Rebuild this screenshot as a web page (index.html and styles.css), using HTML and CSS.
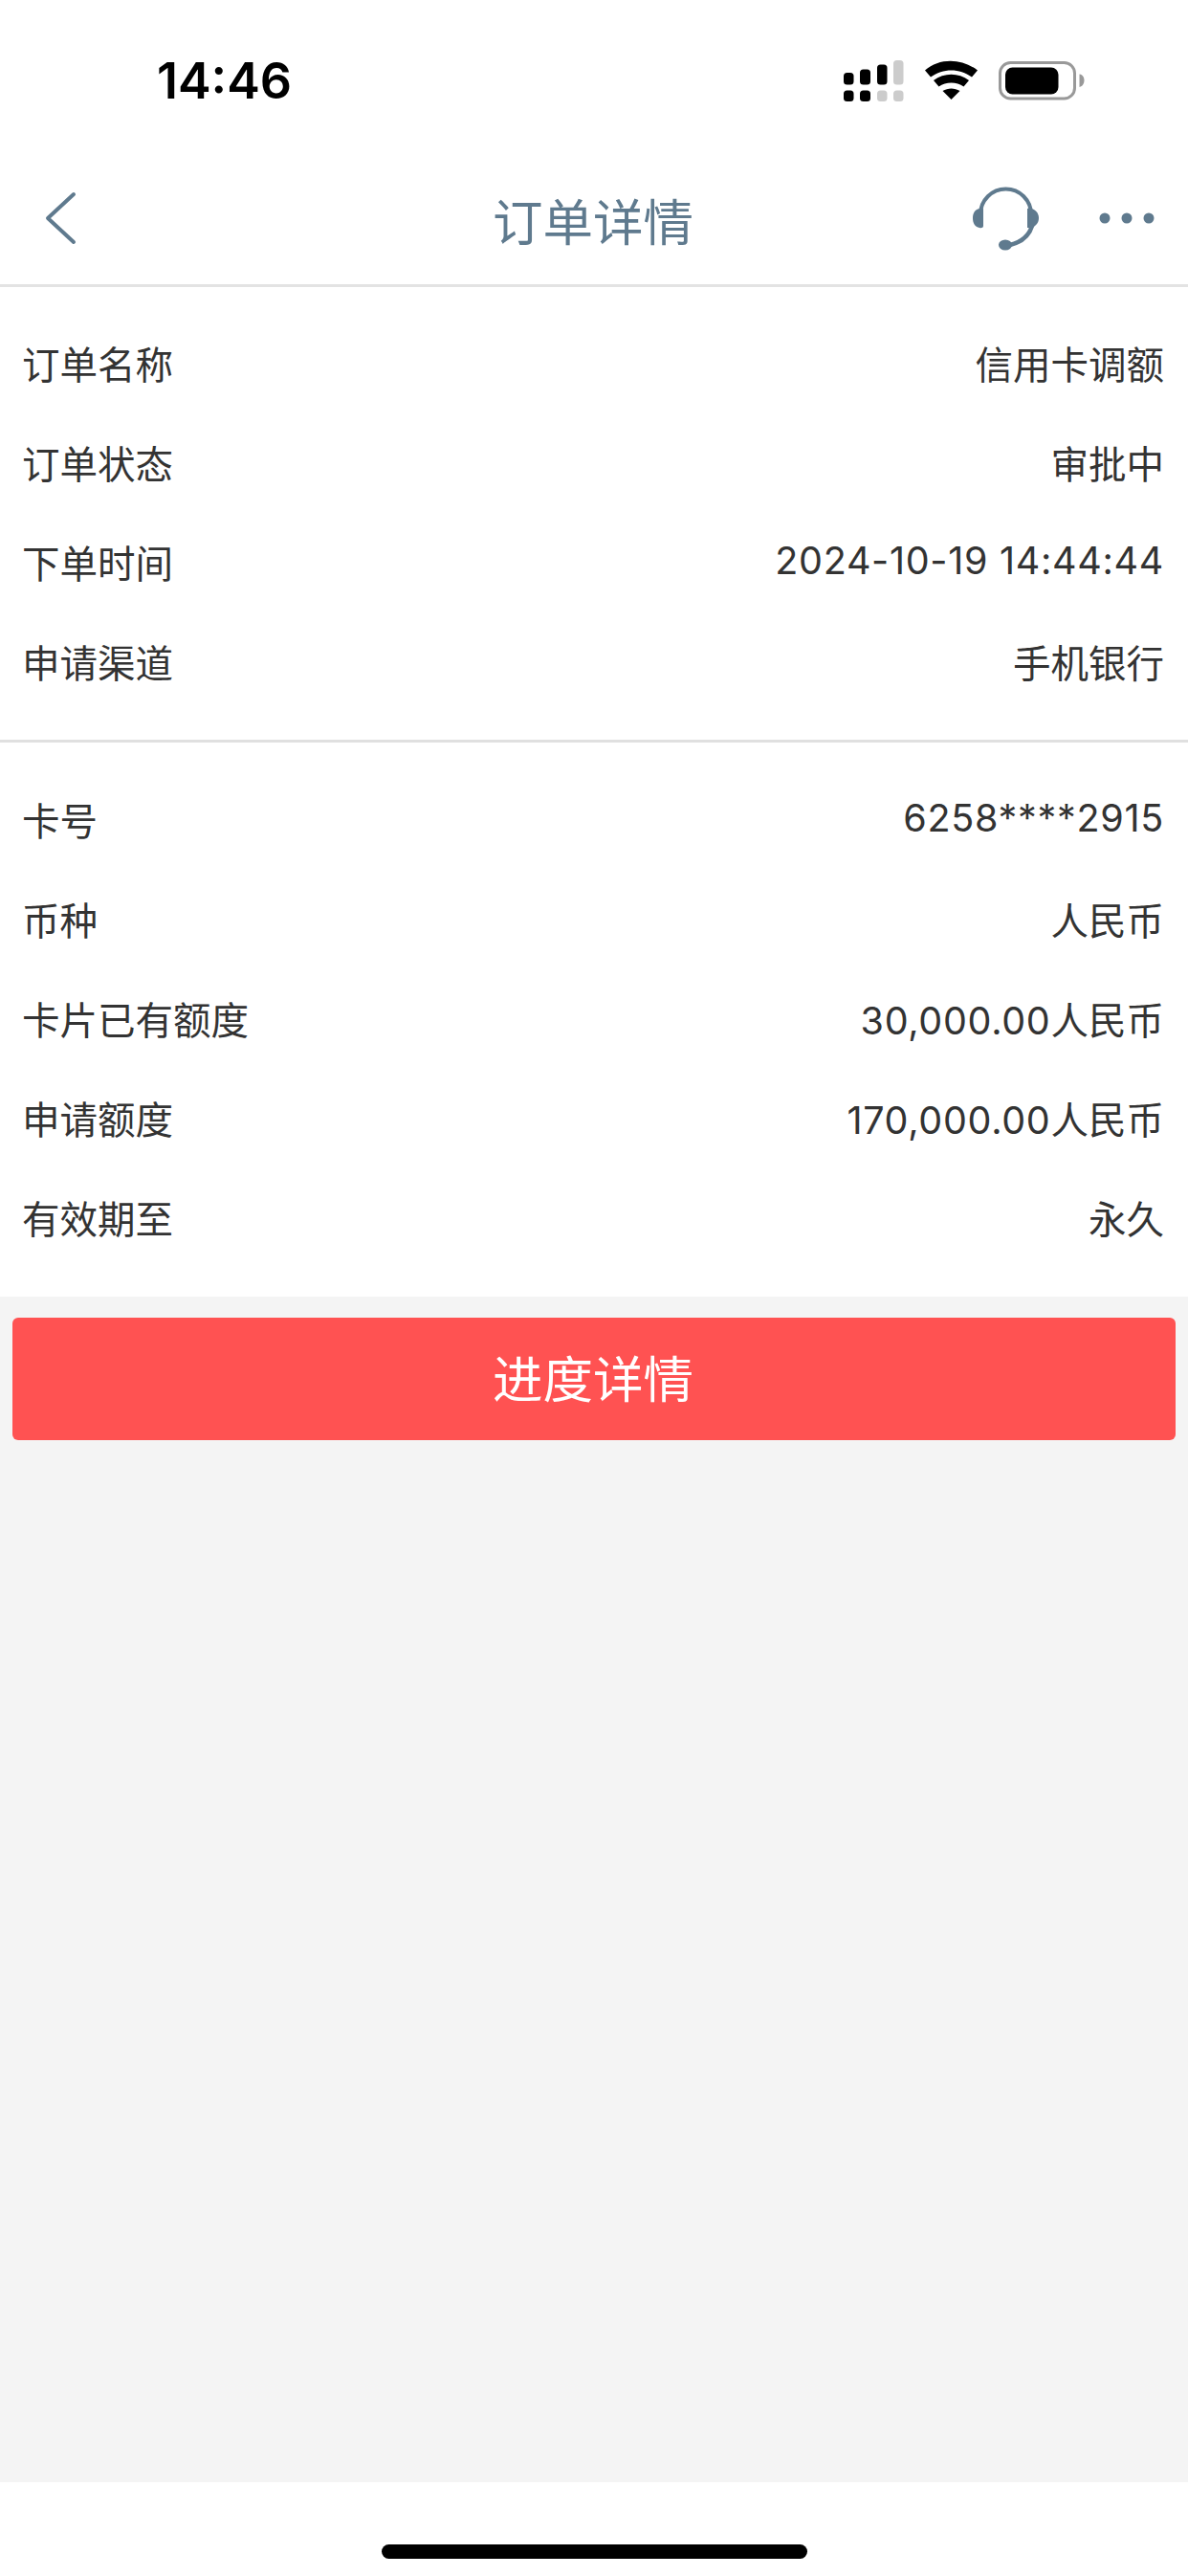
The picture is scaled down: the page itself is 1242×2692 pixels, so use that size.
FILE: index.html
```html
<!DOCTYPE html>
<html lang="zh-CN">
<head>
<meta charset="utf-8">
<title>订单详情</title>
<link rel="stylesheet" href="styles.css">
</head>
<body>
<div class="page">
  <header class="status">
    <span class="time">14:46</span>
    <svg class="status-icons" width="262" height="46" viewBox="880 60 262 46">
      <g fill="#000">
        <rect x="882" y="75" width="10.500" height="12.500" rx="3.500"/>
        <rect x="899" y="71.500" width="11" height="16" rx="3.500"/>
        <rect x="917" y="66.500" width="10.500" height="21" rx="3.500"/>
        <rect x="882" y="93.500" width="10.500" height="11.500" rx="3.500"/>
        <rect x="899" y="93.500" width="11" height="11.500" rx="3.500"/>
      </g>
      <g fill="#cccccc">
        <rect x="934" y="62" width="10.500" height="25.500" rx="3.500"/>
        <rect x="917" y="93.500" width="10.500" height="11.500" rx="3.500"/>
        <rect x="934" y="93.500" width="10.500" height="11.500" rx="3.500"/>
      </g>
      <path fill="#000" d="M967 72.500 C982 59.500 1005 59.500 1022 72.500 L1016 79.500 C1003 70 986 70 973 79.500 Z"/>
      <path fill="#000" d="M976 83 C987 74.500 1002 74.500 1013 83 L1007.500 89.500 C1000 84 989 84 981.500 89.500 Z"/>
      <path fill="#000" d="M985.500 94 C991 90.500 998 90.500 1003.500 94 L994.500 103 Z"/>
      <rect x="1045.500" y="64.500" width="78" height="37.500" rx="11" fill="none" stroke="#999999" stroke-width="3"/>
      <rect x="1051" y="69.500" width="55.500" height="28" rx="7.500" fill="#000"/>
      <path fill="#999999" d="M1128.500 76.500 C1132 77 1133.500 80 1133.500 83 C1133.500 86 1132 89 1128.500 90 Z"/>
    </svg>
  </header>

  <nav class="nav">
    <div class="nav-left">
      <svg width="34" height="56" viewBox="46 200 34 56" fill="none" stroke="#5f7a8e" stroke-width="4" stroke-linecap="round" stroke-linejoin="round">
        <path d="M77 203 L50 228 L77 253"/>
      </svg>
    </div>
    <h1 class="title">订单详情</h1>
    <div class="nav-right">
      <svg class="headset" width="72" height="70" viewBox="1016 193 72 70" fill="none">
        <path d="M1025 224 A26.500 26.500 0 0 1 1078 224 L1078 234" stroke="#5f7a8e" stroke-width="4" stroke-linecap="round"/>
        <path d="M1079 236 C1076 246 1068 253 1056 256" stroke="#5f7a8e" stroke-width="4.500" stroke-linecap="round"/>
        <path fill="#5f7a8e" d="M1028 218 L1028 236 C1028 238 1026 238.500 1024 238 C1019 237 1017 233 1017 228 C1017 223 1019 219 1024 218 C1026 217.500 1028 217 1028 218 Z"/>
        <path fill="#5f7a8e" d="M1074 218 C1081 217 1086 222 1086 228 C1086 234 1081 239 1074 238 Z"/>
        <ellipse cx="1051" cy="256" rx="7" ry="5.500" fill="#5f7a8e"/>
      </svg>
      <svg class="more" width="58" height="12" viewBox="1149 222 58 12" fill="#5f7a8e">
        <circle cx="1155" cy="228" r="5.500"/>
        <circle cx="1178" cy="228" r="5.500"/>
        <circle cx="1201" cy="228" r="5.500"/>
      </svg>
    </div>
  </nav>

  <section class="card card-first">
    <div class="row"><span>订单名称</span><span>信用卡调额</span></div>
    <div class="row"><span>订单状态</span><span>审批中</span></div>
    <div class="row"><span>下单时间</span><span class="num">2024-10-19 14:44:44</span></div>
    <div class="row"><span>申请渠道</span><span>手机银行</span></div>
  </section>

  <section class="card card-second">
    <div class="row"><span>卡号</span><span class="num">6258****2915</span></div>
    <div class="row"><span>币种</span><span>人民币</span></div>
    <div class="row"><span>卡片已有额度</span><span><span class="num">30,000.00</span>人民币</span></div>
    <div class="row"><span>申请额度</span><span><span class="num">170,000.00</span>人民币</span></div>
    <div class="row"><span>有效期至</span><span>永久</span></div>
  </section>

  <main class="content">
    <button class="primary" type="button"><span class="primary-label">进度详情</span></button>
  </main>

  <footer class="home">
    <div class="home-bar"></div>
  </footer>
</div>
</body>
</html>
```
FILE: styles.css
```css
* {
  box-sizing: border-box;
}

html,
body {
  margin: 0;
  padding: 0;
  background: #fff;
}

body {
  font-family: Inter, "Noto Sans CJK SC", sans-serif;
}

.page {
  display: flex;
  flex-direction: column;
  width: 1242px;
  height: 2692px;
  overflow: hidden;
}

.status {
  display: flex;
  justify-content: space-between;
  align-items: center;
  height: 168px;
  padding: 0 100px 0 164px;
  flex: none;
}

.time {
  margin-top: 2px;
  font-size: 52px;
  font-weight: 600;
  line-height: 1;
  color: #000;
}

.status-icons {
  display: block;
}

.nav {
  display: grid;
  grid-template-columns: 1fr auto 1fr;
  align-items: center;
  height: 132px;
  padding: 0 35px 9px;
  border-bottom: 3px solid #e3e3e3;
  flex: none;
}

.nav-left,
.nav-right {
  display: flex;
  align-items: center;
}

.nav-left {
  padding-left: 11px;
}

.nav-right {
  justify-content: flex-end;
  gap: 61px;
}

.title {
  margin: 3px 0 0;
  font-size: 52.500px;
  font-weight: 400;
  line-height: 1.2;
  color: #5f7a8e;
  font-family: "Noto Sans CJK SC", sans-serif;
  transform: translateX(-1px);
}

.card {
  flex: none;
  padding: 29px 0;
  background: #fff;
}

.card-first {
  border-bottom: 3px solid #e0e0e0;
  padding-bottom: 28px;
}

.card-second {
  padding-top: 30px;
}

.row {
  display: flex;
  justify-content: space-between;
  align-items: center;
  height: 104px;
  padding: 0 25px 6px 23px;
  font-size: 39.500px;
  color: #333;
}

.num {
  letter-spacing: 0.700px;
}

.content {
  flex: 1;
  padding: 22px 13px 0;
  background: #f4f4f4;
}

.primary {
  display: block;
  width: 100%;
  height: 128px;
  border: 0;
  border-radius: 6px;
  background: #ff5252;
  color: #fff;
  font-family: "Noto Sans CJK SC", sans-serif;
  font-size: 52.500px;
  padding: 0 2px 6px 0;
}

.home {
  display: flex;
  justify-content: center;
  height: 98px;
  padding-top: 65px;
  background: #fff;
  flex: none;
}

.home-bar {
  width: 445px;
  height: 15px;
  border-radius: 8px;
  background: #000;
}
```
